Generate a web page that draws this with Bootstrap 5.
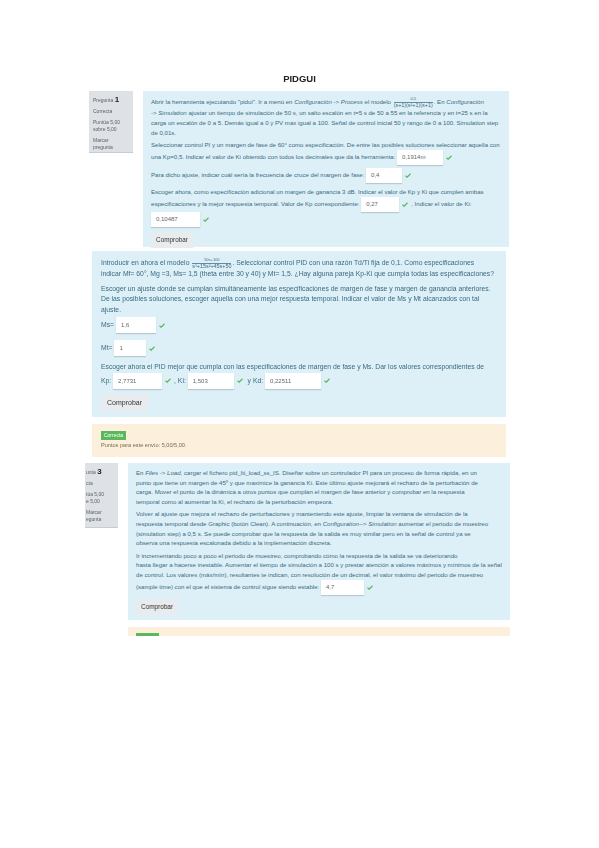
<!DOCTYPE html>
<html lang="es">
<head>
<meta charset="utf-8">
<title>PIDGUI</title>
<link href="https://cdn.jsdelivr.net/npm/bootstrap@5.3.0/dist/css/bootstrap.min.css" rel="stylesheet">
<style>
html,body{background:#fff;}
body{font-family:"Liberation Sans",Arial,sans-serif;color:#3a6a82;height:848px;overflow:hidden;}
.sheet{padding-top:73px;height:636px;overflow:hidden;filter:blur(.4px);}
.doc-title{font-size:9.5px;font-weight:700;color:#222;text-align:center;line-height:11px;height:18px;margin:0;}
.q-row{display:flex;}
.q-one{margin-left:89px;width:420px;gap:10px;}
.q-three{margin-left:85px;width:425px;gap:10px;margin-top:6px;}
.q-side{background:#dee2e6;border-bottom:1px solid #c8ccd0;font-size:5px;line-height:7px;color:#5a6168;overflow:hidden;flex:none;}
.q-one .q-side{width:44px;height:62px;padding:5px 4px;}
.q-three .q-side{width:33px;height:65px;padding:5px 0 0 1px;}
.q-side p{margin:0 0 4px;}
.q-side b{font-size:8px;color:#222;}
.q-body{background:#def0f7;flex:1;min-width:0;}
.q-one .q-body{height:156px;padding:5px 2px 5px 8px;font-size:6.1px;line-height:9.8px;}
.q-three .q-body{height:157px;padding:5px 2px 5px 8px;font-size:6.1px;line-height:9.6px;}
.q-wide{background:#def0f7;margin:4px 0 0 92px;width:414px;height:166px;padding:6px 9px;font-size:6.8px;line-height:10.6px;}
.q-body p,.q-wide p{margin:0 0 3px;}
.frac{display:inline-flex;flex-direction:column;align-items:center;vertical-align:middle;font-size:5.4px;line-height:5.5px;margin:0 1px;}
.frac span:first-child{font-size:4px;}
.frac span+span{border-top:.4px solid #6b8a99;}
.fbk{background:#fcefdc;font-size:5.6px;line-height:8px;color:#7d6a50;}
.fbk-a{margin:7px 0 0 92px;width:414px;height:33px;padding:7px 9px;}
.fbk-b{margin:7px 0 0 128px;width:382px;height:9px;padding:6px 8px 0;overflow:hidden;}
.tag{display:block;width:25px;height:9px;background:#5cb85c;color:#fff;font-size:5px;line-height:9px;text-align:center;border-radius:0;padding:0;font-weight:400;margin-bottom:1px;}
.fbk-b .tag{width:23px;}
.ans{display:inline-block;height:15px;padding:0 5px;font-size:6px;line-height:15px;color:#666;border:0;border-radius:0;box-shadow:0 1px 1px rgba(0,0,0,.16);vertical-align:middle;background:#fff;}
.tick{display:inline-block;width:6px;height:5px;margin:0 3px;vertical-align:middle;}
.w32{width:32px}.w36{width:36px}.w38{width:38px}.w40{width:40px}.w43{width:43px}.w46{width:46px}.w49{width:49px}.w56{width:56px}
.q-wide .ans{height:16px;line-height:16px;}
.check{display:block;font-size:6.4px;line-height:13px;height:16px;padding:1px 0;width:42px;border:0;border-radius:0;background:#e9ecef;color:#333;}
.q-wide .check{width:47px;height:17px;font-size:7px;}
.fld{margin-bottom:5px!important;}
.q-wide .pre-fld{margin-bottom:2px;}
.fld-ms{margin-bottom:7px!important;}
.fld-mt{margin-bottom:6px!important;}
.gap-a{margin-top:3px!important;}
.gap-d{margin-top:4px!important;}
.gap-b{margin-top:4px!important;}
.gap-c{margin-top:5px!important;}
</style>
</head>
<body>
<svg width="0" height="0" class="d-block"><symbol id="ok" viewBox="0 0 12 10"><path d="M1 5.5 4.3 8.5 11 1.5" fill="none" stroke="#5cb85c" stroke-width="2.4"/></symbol></svg>
<main class="sheet">
  <h1 class="doc-title">PIDGUI</h1>

  <section class="q-row q-one">
    <aside class="q-side">
      <p>Pregunta <b>1</b></p>
      <p>Correcta</p>
      <p class="mb-0">Puntúa 5,00</p>
      <p>sobre 5,00</p>
      <p class="mb-0">Marcar</p>
      <p>pregunta</p>
    </aside>
    <div class="q-body">
      <p>Abrir la herramienta ejecutando "pidui". Ir a menú en <i>Configuración</i> -&gt; <i>Process</i> el modelo <span class="frac"><span>0,5</span><span>(s+1)(s²+1)(s+1)</span></span>. En <i>Configuración</i><br>-&gt; <i>Simulation</i> ajustar un tiempo de simulación de 50 s, un salto escalón en t=5 s de 50 a 55 en la referencia y en t=25 s en la<br>carga un escalón de 0 a 5. Demás igual a 0 y PV max igual a 100. Señal de control inicial 50 y rango de 0 a 100. Simulation step<br>de 0,01s.</p>
      <p class="mb-0">Seleccionar control PI y un margen de fase de 60° como especificación. De entre las posibles soluciones seleccionar aquella con<br>una Kp=0,5. Indicar el valor de Ki obtenido con todos los decimales que da la herramienta: <span class="ans w46">0,1914m</span><svg class="tick"><use href="#ok"/></svg></p>
      <p class="mb-0 gap-a">Para dicho ajuste, indicar cuál sería la frecuencia de cruce del margen de fase: <span class="ans w36">0,4</span><svg class="tick"><use href="#ok"/></svg></p>
      <p class="mb-0 gap-d">Escoger ahora, como especificación adicional un margen de ganancia 3 dB. Indicar el valor de Kp y Ki que cumplen ambas<br>especificaciones y la mejor respuesta temporal. Valor de Kp correspondiente: <span class="ans w38">0,27</span><svg class="tick"><use href="#ok"/></svg>, Indicar el valor de Ki:<br><span class="ans w49">0,10487</span><svg class="tick"><use href="#ok"/></svg></p>
      <button type="button" class="btn check gap-c">Comprobar</button>
    </div>
  </section>

  <section class="q-wide">
    <p class="mb-1">Introducir en ahora el modelo <span class="frac"><span>50s+100</span><span>s³+15s²+45s+50</span></span>. Seleccionar control PID con una razón Td/Ti fija de 0,1. Como especificaciones<br>indicar Mf= 60°, Mg =3, Ms= 1,5 (theta entre 30 y 40) y Mt= 1,5. ¿Hay alguna pareja Kp-Ki que cumpla todas las especificaciones?</p>
    <p class="pre-fld">Escoger un ajuste donde se cumplan simultáneamente las especificaciones de margen de fase y margen de ganancia anteriores. De las posibles soluciones, escoger aquella con una mejor respuesta temporal. Indicar el valor de Ms y Mt alcanzados con tal ajuste.</p>
    <p class="fld-ms">Ms= <span class="ans w40">1,6</span><svg class="tick"><use href="#ok"/></svg></p>
    <p class="fld-mt">Mt= <span class="ans w32">1</span><svg class="tick"><use href="#ok"/></svg></p>
    <p class="fld">Escoger ahora el PID mejor que cumpla con las especificaciones de margen de fase y Ms. Dar los valores correspondientes de<br>Kp: <span class="ans w49">2,7731</span><svg class="tick"><use href="#ok"/></svg>, Ki: <span class="ans w46">1,503</span><svg class="tick"><use href="#ok"/></svg> y Kd: <span class="ans w56">0,22511</span><svg class="tick"><use href="#ok"/></svg></p>
    <button type="button" class="btn check">Comprobar</button>
  </section>

  <section class="fbk fbk-a">
    <span class="badge tag">Correcta</span>
    Puntos para este envío: 5,00/5,00.
  </section>

  <section class="q-row q-three">
    <aside class="q-side">
      <p>unta <b>3</b></p>
      <p>cta</p>
      <p class="mb-0">túa 5,00</p>
      <p>e 5,00</p>
      <p class="mb-0">Marcar</p>
      <p>egunta</p>
    </aside>
    <div class="q-body">
      <p>En <i>Files</i> -&gt; <i>Load</i>, cargar el fichero pid_lti_load_ss_IS. Diseñar sobre un controlador PI para un proceso de forma rápida, en un<br>punto que tiene un margen de 45º y que maximice la ganancia Ki. Este último ajuste mejorará el rechazo de la perturbación de<br>carga. Mover el punto de la dinámica a otros puntos que cumplan el margen de fase anterior y comprobar en la respuesta<br>temporal como al aumentar la Ki, el rechazo de la perturbación empeora.</p>
      <p>Volver al ajuste que mejora el rechazo de perturbaciones y manteniendo este ajuste, limpiar la ventana de simulación de la<br>respuesta temporal desde Graphic (botón Clean). A continuación, en <i>Configuration--&gt; Simulation</i> aumentar el periodo de muestreo<br>(simulation step) a 0,5 s. Se puede comprobar que la respuesta de la salida es muy similar pero en la señal de control ya se<br>observa una respuesta escalonada debido a la implementación discreta.</p>
      <p class="mb-1">Ir incrementando poco a poco el periodo de muestreo, comprobando cómo la respuesta de la salida se va deteriorando<br>hasta llegar a hacerse inestable. Aumentar el tiempo de simulación a 100 s y prestar atención a valores máximos y mínimos de la señal<br>de control. Los valores (máx/mín), resultantes te indican, con resolución de un decimal, el valor máximo del periodo de muestreo<br>(sample time) con el que el sistema de control sigue siendo estable: <span class="ans w43">4,7</span><svg class="tick"><use href="#ok"/></svg></p>
      <button type="button" class="btn check gap-b">Comprobar</button>
    </div>
  </section>

  <section class="fbk fbk-b"><span class="badge tag">&nbsp;</span></section>
</main>
<script src="https://cdn.jsdelivr.net/npm/bootstrap@5.3.0/dist/js/bootstrap.bundle.min.js"></script>
</body>
</html>
